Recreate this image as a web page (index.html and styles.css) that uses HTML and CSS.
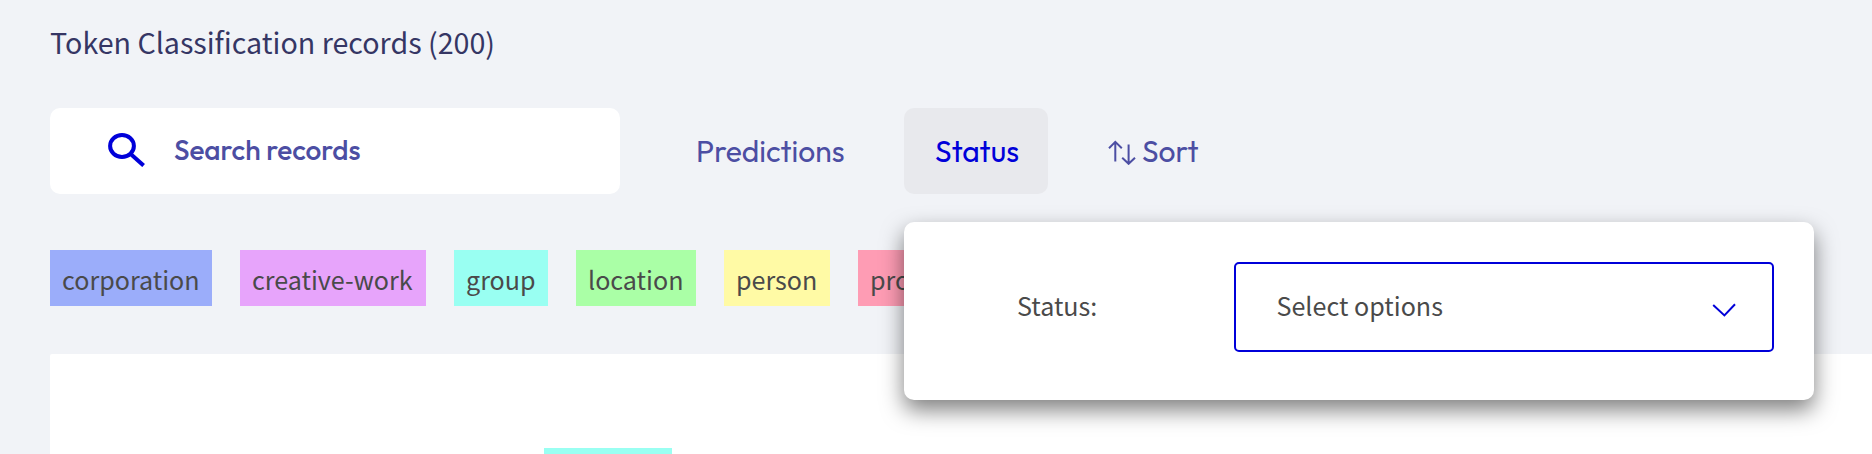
FILE: index.html
```html
<!DOCTYPE html>
<html lang="en">
<head>
<meta charset="utf-8">
<title>Token Classification records</title>
<link rel="stylesheet" href="styles.css">
</head>
<body>
<main class="page">
  <h1 class="title"><span>Token Classification records (200)</span></h1>
  <div class="toolbar">
    <label class="search">
      <svg class="search-icon" width="38" height="36" viewBox="0 0 38 36" fill="none" stroke="currentColor" stroke-width="4"><ellipse cx="15" cy="15" rx="11.9" ry="10.9"/><path d="M24.5 23.7 36.6 34.6"/></svg>
      <span class="search-text">Search records</span>
    </label>
    <div class="filter"><span class="predictions">Predictions</span></div>
    <div class="filter active">
      <span class="status">Status</span>
      <div class="popup">
        <span class="popup-label">Status:</span>
        <div class="select">
          <span class="select-text">Select options</span>
          <svg class="chevron" width="24" height="14" viewBox="0 0 24 14" fill="none" stroke="currentColor" stroke-width="2"><path d="M1.2 2 12.4 12.4 23 1.2"/></svg>
        </div>
      </div>
    </div>
    <div class="filter sort">
      <svg class="sort-icon" width="28" height="26" viewBox="0 0 28 26" fill="none" stroke="currentColor" stroke-width="2"><path d="M7.3 22.5V3M1 9.3 7.3 2.9 13.8 9.3M20.6 5.5V25M14.2 18.7 20.6 24.8 27 18.7"/></svg>
      <span class="sort-text">Sort</span>
    </div>
  </div>
  <div class="tags">
    <span class="tag corporation">corporation</span>
    <span class="tag creative">creative-work</span>
    <span class="tag group">group</span>
    <span class="tag location">location</span>
    <span class="tag person">person</span>
    <span class="tag product">product</span>
  </div>
  <section class="records"><span class="entity"></span></section>
</main>
</body>
</html>
```
FILE: styles.css
```css
* { box-sizing: border-box; }
body { margin: 0; background: #f1f3f7; overflow: hidden; font-family: "Noto Sans CJK SC", sans-serif; color: #4a4a4a; }
svg { display: block; flex: none; }
.page { height: 454px; padding-left: 50px; display: flex; flex-direction: column; overflow: hidden; }
.title { margin: 0; height: 108px; flex: none; padding-top: 22px; font-size: 28.65px; line-height: 40px; font-weight: 400; color: #353664; white-space: nowrap; }
.toolbar { display: flex; height: 86px; flex: none; font-family: Outfit, Lato, sans-serif; color: #4c4ea3; white-space: nowrap; }
.search { width: 570px; padding-left: 57px; border-radius: 10px; background: #fff; display: flex; align-items: center; gap: 29px; }
.search-icon { color: #0000d9; margin-top: -5px; }
.search-text { font-size: 28px; font-weight: 500; line-height: 36px; padding-bottom: 2px; }
.filter { position: relative; display: flex; align-items: center; font-size: 30px; line-height: 36px; }
.filter:nth-child(2) { margin-left: 76px; width: 208px; }
.active { width: 144px; padding-left: 31px; border-radius: 10px; background: #e8e9ed; color: #0000d9; }
.sort { margin-left: 60px; gap: 6px; }
.sort-icon { margin-top: 2px; }
.popup { position: absolute; z-index: 2; left: 0; top: 114px; width: 910px; height: 178px; padding: 0 40px 8px 113px; border-radius: 10px; background: #fff; box-shadow: 0 10px 22px rgba(0, 0, 0, .5); display: flex; align-items: center; justify-content: space-between; font-family: "Noto Sans CJK SC", sans-serif; font-size: 25.1px; color: #4a4a4a; }
.popup-label, .select-text { padding-bottom: 4px; }
.select { width: 540px; height: 90px; padding: 0 36px 0 40.5px; border: 2px solid #0000d9; border-radius: 5px; display: flex; align-items: center; justify-content: space-between; color: #0000d9; }
.select-text { color: #4a4a4a; }
.chevron { margin-top: 5px; }
.tags { display: flex; gap: 28px; margin-top: 56px; flex: none; }
.tag { height: 56px; padding: 10px 0 0 12px; font-size: 25.1px; line-height: 38px; white-space: nowrap; }
.corporation { width: 162px; background: #9badfa; }
.creative { width: 186px; background: #e7a4fb; }
.group { width: 94px; background: #99fff2; }
.location { width: 120px; background: #aaffa6; }
.person { width: 106px; background: #fffaa5; }
.product { width: 116px; background: #fe9cb4; }
.records { flex: 1; min-height: 0; margin-top: 48px; padding: 94px 0 0 494px; background: #fff; border-top-left-radius: 2px; }
.entity { display: block; width: 128px; height: 56px; background: #99fff2; }
```
